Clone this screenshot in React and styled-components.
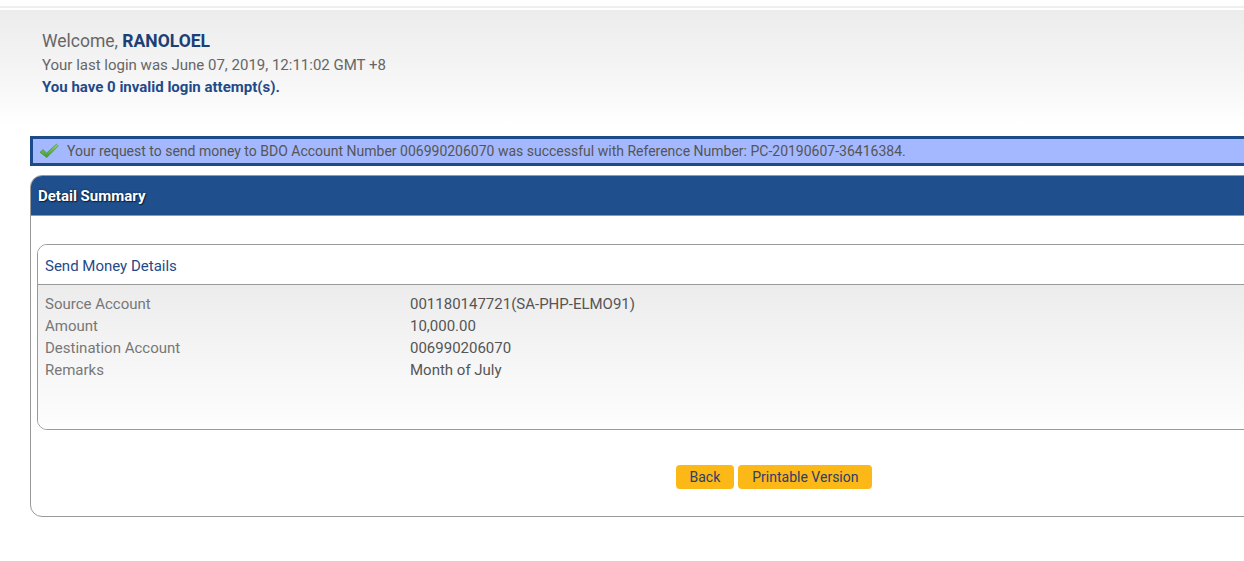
import React from 'react';
import styled, { createGlobalStyle } from 'styled-components';

const GlobalStyle = createGlobalStyle`
  html, body {
    margin: 0;
    padding: 0;
    overflow: hidden;
    background: #fff;
    font-family: Roboto, "Liberation Sans", Arial, sans-serif;
  }
`;

const Page = styled.div`
  width: 1244px;
  min-height: 561px;
  overflow: hidden;
`;

const TopLine = styled.div`
  margin-top: 6px;
  height: 2px;
  background: #efefef;
  border-bottom: 2px solid #fff;
`;

const Greeting = styled.header`
  height: 95px;
  padding: 20px 0 0 42px;
  background: linear-gradient(to bottom, #ececec 0%, #f6f6f6 60%, #fff 100%);
`;

const Welcome = styled.div`
  font-size: 17.5px;
  line-height: 22px;
  color: #666;

  strong {
    color: #1b3f76;
    font-weight: 700;
  }
`;

const InfoLine = styled.div`
  margin-top: ${(p) => p.$gap || 0}px;
  font-size: 15px;
  line-height: 22px;
  color: ${(p) => (p.$strong ? '#1f4a8a' : '#666')};
  font-weight: ${(p) => (p.$strong ? 700 : 400)};
`;

const Notice = styled.div`
  margin: 11px 0 0 30px;
  width: 1400px;
  height: 24px;
  display: flex;
  align-items: center;
  gap: 8px;
  padding-left: 6px;
  background: #a3b8fe;
  border-top: 3px solid #1d4b8a;
  border-bottom: 3px solid #1d4b8a;
  border-left: 3px solid #1d4b8a;
  font-size: 14px;
  color: #555;
`;

const Panel = styled.section`
  margin: 9px 0 0 30px;
  width: 1487px;
  border: 1px solid #999;
  border-radius: 12px 0 0 12px;
  overflow: hidden;
  padding-bottom: 27px;
`;

const PanelHead = styled.div`
  height: 39px;
  display: flex;
  align-items: center;
  padding-left: 7px;
  background: #1f4f8c;
  border-bottom: 1px solid #999;
  color: #fff;
  font-size: 15px;
  font-weight: 700;
  text-shadow: 0 0 2px #0b2244, 1px 1px 1px #0b2244;
`;

const DetailBox = styled.div`
  margin: 28px 0 0 6px;
  border: 1px solid #999;
  border-radius: 10px 0 0 10px;
  overflow: hidden;
`;

const BoxTitle = styled.div`
  height: 37px;
  padding: 2px 0 0 7px;
  display: flex;
  align-items: center;
  font-size: 15px;
  color: #1f4a8a;
  border-bottom: 1px solid #999;
  background: #fff;
`;

const BoxBody = styled.div`
  padding: 8px 0 48px 7px;
  background: linear-gradient(to bottom, #ececec 0%, #f7f7f7 60%, #fdfdfd 100%);
`;

const Row = styled.div`
  display: grid;
  grid-template-columns: 365px 1fr;
  font-size: 15px;
  line-height: 22px;
`;

const Label = styled.span`
  color: #777;
`;

const Value = styled.span`
  color: #555;
`;

const Actions = styled.div`
  margin-top: 35px;
  display: flex;
  justify-content: center;
  gap: 4px;
  padding-right: 1px;
`;

const Button = styled.button`
  height: 24px;
  padding: 0 ${(p) => p.$pad}px;
  border: none;
  border-radius: 4px;
  background: #fbb816;
  color: #2b3f6c;
  font-family: inherit;
  font-size: 14px;
  cursor: pointer;
`;

const CheckIcon = () => (
  <svg width="20" height="16" viewBox="0 0 20 16">
    <defs>
      <linearGradient id="chk" x1="0" y1="0" x2="0" y2="1">
        <stop offset="0" stopColor="#8fd46a" />
        <stop offset="1" stopColor="#3d9a2c" />
      </linearGradient>
    </defs>
    <path
      d="M1 9.2 L4 6.6 L7.6 10 L17.4 1.2 L19.2 3 L7.8 14.6 Z"
      fill="url(#chk)"
      stroke="#3a8a2a"
      strokeWidth="0.6"
      strokeLinejoin="round"
    />
  </svg>
);

const details = [
  ['Source Account', '001180147721(SA-PHP-ELMO91)'],
  ['Amount', '10,000.00'],
  ['Destination Account', '006990206070'],
  ['Remarks', 'Month of July'],
];

export default function App() {
  return (
    <Page>
      <GlobalStyle />
      <TopLine />
      <Greeting>
        <Welcome>
          Welcome, <strong>RANOLOEL</strong>
        </Welcome>
        <InfoLine $gap={2}>Your last login was June 07, 2019, 12:11:02 GMT +8</InfoLine>
        <InfoLine $strong>You have 0 invalid login attempt(s).</InfoLine>
      </Greeting>

      <Notice>
        <CheckIcon />
        <span>
          Your request to send money to BDO Account Number 006990206070 was successful with
          Reference Number: PC-20190607-36416384.
        </span>
      </Notice>

      <Panel>
        <PanelHead>Detail Summary</PanelHead>
        <DetailBox>
          <BoxTitle>Send Money Details</BoxTitle>
          <BoxBody>
            {details.map(([label, value]) => (
              <Row key={label}>
                <Label>{label}</Label>
                <Value>{value}</Value>
              </Row>
            ))}
          </BoxBody>
        </DetailBox>
        <Actions>
          <Button $pad={14}>Back</Button>
          <Button $pad={14}>Printable Version</Button>
        </Actions>
      </Panel>
    </Page>
  );
}
